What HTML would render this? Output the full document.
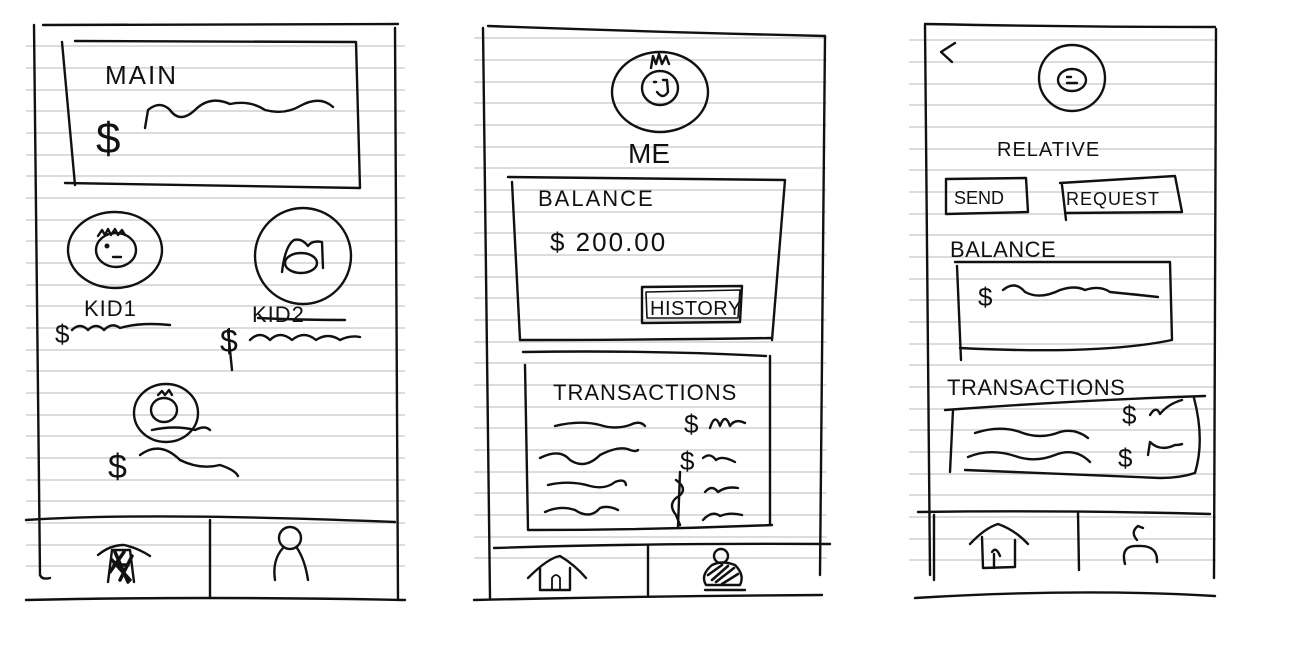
<!DOCTYPE html>
<html><head><meta charset="utf-8"><style>
html,body{margin:0;padding:0;background:#fff;width:1304px;height:648px;overflow:hidden}
svg{display:block}
text{font-family:"Liberation Sans",sans-serif;fill:#111;font-weight:normal;stroke:none}
</style></head><body>
<svg width="1304" height="648" viewBox="0 0 1304 648" xmlns="http://www.w3.org/2000/svg">
<g stroke="#c6c6c6" stroke-width="1.2">
<g id="rl">
<line x1="26" y1="46" x2="405" y2="46"/><line x1="26" y1="68" x2="405" y2="68"/><line x1="26" y1="90" x2="405" y2="90"/><line x1="26" y1="111" x2="405" y2="111"/><line x1="26" y1="133" x2="405" y2="133"/><line x1="26" y1="155" x2="405" y2="155"/><line x1="26" y1="176" x2="405" y2="176"/><line x1="26" y1="198" x2="405" y2="198"/><line x1="26" y1="220" x2="405" y2="220"/><line x1="26" y1="241" x2="405" y2="241"/><line x1="26" y1="263" x2="405" y2="263"/><line x1="26" y1="285" x2="405" y2="285"/><line x1="26" y1="306" x2="405" y2="306"/><line x1="26" y1="328" x2="405" y2="328"/><line x1="26" y1="350" x2="405" y2="350"/><line x1="26" y1="371" x2="405" y2="371"/><line x1="26" y1="393" x2="405" y2="393"/><line x1="26" y1="415" x2="405" y2="415"/><line x1="26" y1="436" x2="405" y2="436"/><line x1="26" y1="458" x2="405" y2="458"/><line x1="26" y1="480" x2="405" y2="480"/><line x1="26" y1="501" x2="405" y2="501"/><line x1="26" y1="523" x2="405" y2="523"/><line x1="26" y1="545" x2="405" y2="545"/><line x1="26" y1="566" x2="405" y2="566"/>
</g>
<use href="#rl" transform="translate(450,-8) scale(0.93,1)"/>
<use href="#rl" transform="translate(888,-6) scale(0.81,1)"/>
</g>
<g fill="none" stroke="#111" stroke-width="2.4" stroke-linecap="round" stroke-linejoin="round">
<!-- LEFT PHONE -->
<path d="M34 25 L40 575 Q42 580 50 578"/>
<path d="M43 25 L398 24"/>
<path d="M395 28 L398 600"/>
<path d="M26 600 Q200 596 405 600"/>
<path d="M26 520 Q150 512 395 522"/>
<path d="M210 520 L210 598"/>
<path d="M62 42 L75 185"/><path d="M75 41 L356 42 L360 188 L65 183"/>
<text x="105" y="84" font-size="26" letter-spacing="2">MAIN</text>
<text x="96" y="153" font-size="44">$</text>
<path d="M145 128 L148 110 Q160 100 170 110 Q180 124 195 110 Q210 95 230 104 Q250 100 265 110 Q285 115 300 106 Q320 95 333 107"/>
<ellipse cx="115" cy="250" rx="47" ry="38"/>
<ellipse cx="116" cy="250" rx="20" ry="17"/>
<path d="M98 236 l4 -6 l3 5 l3 -6 l3 6 l4 -6 l3 6 l4 -5 l3 5"/>
<circle cx="107" cy="246" r="1.3"/><path d="M113 257 l8 0"/>
<text x="84" y="316" font-size="22" letter-spacing="1">KID1</text>
<text x="55" y="343" font-size="26">$</text>
<path d="M72 330 Q80 322 88 330 Q96 322 104 330 Q112 322 120 328 Q140 322 170 325"/>
<circle cx="303" cy="256" r="48"/>
<path d="M282 272 Q285 246 294 240 Q302 238 308 246 Q312 240 322 242 L323 268"/>
<ellipse cx="301" cy="263" rx="16" ry="10"/>
<text x="252" y="322" font-size="22" letter-spacing="1">KID2</text>
<path d="M258 318 Q300 320 345 320"/>
<text x="220" y="352" font-size="32">$</text>
<path d="M250 340 Q260 330 270 340 Q280 330 292 340 Q304 330 316 340 Q328 332 340 340 Q350 335 360 337"/>
<path d="M228 330 L232 370"/>
<ellipse cx="166" cy="413" rx="32" ry="29"/>
<ellipse cx="164" cy="410" rx="13" ry="12"/>
<path d="M158 395 l4 -4 l3 4 l4 -5 l3 5"/>
<text x="108" y="478" font-size="34">$</text>
<path d="M140 455 Q160 440 180 460 Q200 470 220 465 Q235 470 238 476"/>
<path d="M152 430 Q175 425 195 430 Q205 425 210 430"/>
<path d="M98 555 Q110 545 124 545 Q138 548 150 556"/>
<path d="M108 582 L112 550 L130 550 L134 582"/>
<path d="M112 560 L130 580 M115 552 L128 582 M110 572 L124 552 M120 580 L132 556 M114 565 L128 565" stroke-width="3.5"/>
<circle cx="290" cy="538" r="11"/>
<path d="M283 548 Q272 560 275 580 M297 548 Q305 560 308 580"/>
<!-- MIDDLE PHONE -->
<path d="M483 28 L490 598"/>
<path d="M488 26 Q650 32 825 36"/>
<path d="M825 36 L820 575"/>
<path d="M474 600 Q650 596 822 595"/>
<path d="M494 548 Q650 543 830 544"/>
<path d="M648 546 L648 596"/>
<ellipse cx="660" cy="92" rx="48" ry="40"/>
<ellipse cx="660" cy="88" rx="18" ry="17"/>
<path d="M651 68 l2 -12 l3 8 l3 -10 l3 10 l4 -8 l3 8"/>
<path d="M654 82 l2 0 M663 80 l3 0 M657 92 Q663 100 668 92 L667 80"/>
<text x="628" y="163" font-size="28">ME</text>
<path d="M508 177 Q640 178 785 180 L772 340"/><path d="M512 182 L520 340"/><path d="M520 340 Q640 340 772 338"/>
<text x="538" y="206" font-size="22" letter-spacing="2">BALANCE</text>
<text x="550" y="251" font-size="26" letter-spacing="2">$ 200.00</text>
<path d="M642 287 L742 286 L740 322 L642 323 Z"/><path d="M646 292 L740 290 L738 318 L647 318 Z" stroke-width="1.6"/>
<text x="650" y="315" font-size="20" letter-spacing="0.5">HISTORY</text>
<path d="M523 352 Q650 350 766 356"/>
<path d="M770 356 L770 525"/><path d="M525 365 L528 530 Q650 530 772 525"/>
<text x="553" y="400" font-size="22" letter-spacing="1">TRANSACTIONS</text>
<path d="M555 426 Q580 420 600 425 Q615 430 630 425 Q640 420 645 426"/>
<path d="M540 458 Q560 448 570 460 Q585 470 600 455 Q620 445 630 450 Q636 452 638 450"/>
<path d="M548 485 Q570 480 590 486 Q605 490 615 482 Q625 478 626 485"/>
<path d="M545 512 Q560 505 575 510 Q590 520 600 508 Q608 505 618 510"/>
<text x="684" y="433" font-size="26">$</text>
<path d="M710 428 Q715 412 720 426 Q725 412 730 426 Q735 418 745 423"/>
<text x="680" y="470" font-size="26">$</text>
<path d="M703 458 Q710 452 716 460 Q722 455 735 462"/>
<path d="M676 480 Q690 490 676 498 Q668 505 676 515 L680 525 M680 472 L678 527"/>
<path d="M705 492 Q712 484 718 492 Q726 486 738 488"/>
<path d="M703 520 Q712 510 720 516 Q730 512 742 515"/>
<path d="M528 578 Q548 558 560 556 Q575 565 586 578"/>
<path d="M540 568 L540 590 L570 590 L570 568"/><path d="M552 590 L552 578 Q556 572 560 578 L560 590" stroke-width="1.8"/>
<path d="M706 585 Q700 575 712 565 Q722 560 735 565 Q745 575 740 585 Z"/>
<circle cx="721" cy="556" r="7"/>
<path d="M712 580 L728 566 M716 582 L734 568 M722 584 L738 574 M708 575 L722 565" stroke-width="2.6"/>
<path d="M705 590 L745 590"/>
<!-- RIGHT PHONE -->
<path d="M925 25 L930 575"/>
<path d="M925 24 Q1080 27 1215 27"/>
<path d="M1216 29 L1214 578"/>
<path d="M915 598 Q1080 588 1215 596"/>
<path d="M918 512 Q1060 510 1210 514"/>
<path d="M934 515 L934 580"/>
<path d="M1078 512 L1079 570"/>
<path d="M955 43 L941 52 L952 62"/>
<circle cx="1072" cy="78" r="33"/>
<ellipse cx="1072" cy="80" rx="14" ry="11"/>
<path d="M1067 77 l4 0 M1067 83 l10 0"/>
<text x="997" y="156" font-size="20" letter-spacing="1">RELATIVE</text>
<path d="M946 179 L1026 178 L1028 212 L946 214 Z"/>
<text x="954" y="204" font-size="18">SEND</text>
<path d="M1060 183 L1175 176 L1182 212 L1066 213"/><path d="M1062 185 L1066 220"/>
<text x="1066" y="205" font-size="18" letter-spacing="1">REQUEST</text>
<text x="950" y="257" font-size="22" letter-spacing="0.5">BALANCE</text>
<path d="M955 262 L1170 262 L1172 340 Q1100 355 960 348"/><path d="M957 266 L961 360"/>
<text x="978" y="306" font-size="26">$</text>
<path d="M1003 290 Q1015 280 1025 292 Q1040 300 1060 290 Q1075 285 1085 290 Q1100 285 1110 292 Q1140 295 1158 297"/>
<text x="947" y="395" font-size="22" letter-spacing="0.5">TRANSACTIONS</text>
<path d="M945 410 Q1080 400 1205 396"/>
<path d="M953 410 L950 472 M1194 398 Q1205 440 1195 473 Q1180 478 1160 478 L965 470"/>
<path d="M975 433 Q1000 425 1020 432 Q1040 440 1060 432 Q1075 428 1088 438"/>
<path d="M968 457 Q990 448 1015 456 Q1035 463 1055 455 Q1075 447 1090 462"/>
<text x="1122" y="424" font-size="26">$</text>
<path d="M1150 415 Q1156 405 1160 414 Q1168 404 1182 400"/>
<text x="1118" y="467" font-size="26">$</text>
<path d="M1148 455 L1150 442 Q1160 452 1175 445 Q1180 445 1182 444"/>
<path d="M970 544 Q985 528 998 524 Q1015 530 1028 544"/>
<path d="M982 537 L983 568 L1015 567 L1015 540"/><path d="M994 568 L994 554 M992 552 Q996 546 1000 556"/>
<path d="M1137 540 Q1130 532 1138 526 L1143 528"/>
<path d="M1125 564 Q1120 545 1138 546 Q1158 545 1157 562"/>
</g>
</svg>
</body></html>
